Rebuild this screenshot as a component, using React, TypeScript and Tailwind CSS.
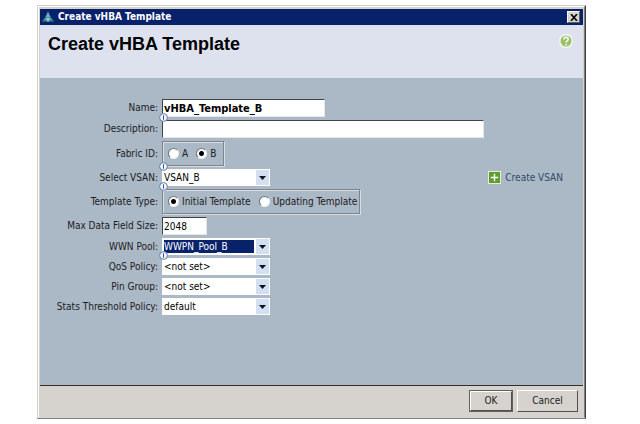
import { ReactNode } from 'react';

interface RowProps {
  label: string;
  htmlFor?: string;
  info?: boolean;
  children: ReactNode;
  action?: ReactNode;
}

export default function App() {
  return (
    <main className="bg-white pt-[5px] pr-[54px] pb-1 pl-[37px] font-['DejaVu_Sans_Condensed','DejaVu_Sans',sans-serif] text-[10px] leading-3 text-[#1c2024]">
      <div className="border border-t-[#d4d0c8] border-r-[#404040] border-b-[#808080] border-l-[#d4d0c8] bg-[#d6d3ce]">
        <div className="border border-t-white border-r-[#808080] border-b-[#d6d3ce] border-l-white px-px pt-[2px]">
          <TitleBar />
          <header className="flex h-[53px] items-start justify-between bg-[#dee2ef] pt-[9px] pr-[10px] pl-2">
            <h1 className="font-['Liberation_Sans',Arial,sans-serif] text-lg leading-5 font-bold text-black">
              Create vHBA Template
            </h1>
            <HelpIcon />
          </header>
          <TemplateForm />
          <footer className="flex justify-end gap-1 border-t border-[#303030] pt-1 pr-[5px] pb-[5px]">
            <button
              type="button"
              className="h-[22px] w-11 border-2 border-t-white border-r-[#505050] border-b-[#505050] border-l-white outline outline-1 -outline-offset-1 outline-[#606060]"
            >
              OK
            </button>
            <button
              type="button"
              className="h-[22px] w-[61px] border border-t-white border-r-[#505050] border-b-[#505050] border-l-white"
            >
              Cancel
            </button>
          </footer>
        </div>
      </div>
    </main>
  );
}

function TitleBar() {
  return (
    <div className="flex h-4 items-center gap-1 bg-[#08216b] pr-[3px] pl-[2px]">
      <svg viewBox="0 0 12 12" className="size-3" aria-hidden="true">
        <path d="M6 0.5 L8.5 6 H3.5 Z" fill="#6fb0b8" />
        <path d="M3.2 6 H8.8 L12 10.5 H0 Z" fill="#3f8494" />
        <path d="M3.5 7 H8.5 L6 11.5 Z" fill="#8cc8c8" />
      </svg>
      <span className="flex-1 font-bold text-white">Create vHBA Template</span>
      <button
        type="button"
        aria-label="Close"
        className="flex h-3 w-[13px] items-center justify-center border border-t-white border-r-[#606060] border-b-[#606060] border-l-white bg-[#d6d3ce]"
      >
        <svg viewBox="0 0 8 7" className="h-[7px] w-2" aria-hidden="true">
          <path d="M1 0 L7 7 M7 0 L1 7" stroke="#000" strokeWidth="1.6" />
        </svg>
      </button>
    </div>
  );
}

function TemplateForm() {
  return (
    <form className="flex flex-col gap-[3px] bg-[#abb8c5] px-5 pt-[21px] pb-[70px]">
      <Row label="Name:" htmlFor="name" info>
        <TextField id="name" value="vHBA_Template_B" className="w-[163px] text-[11px] font-bold" />
      </Row>
      <Row label="Description:" htmlFor="description">
        <TextField id="description" value="" className="w-[322px]" />
      </Row>
      <Row label="Fabric ID:" info>
        <RadioGroup name="fabric" label="Fabric ID" options={['A', 'B']} selected="B" />
      </Row>
      <Row
        label="Select VSAN:"
        htmlFor="vsan"
        info
        action={
          <a href="#create-vsan" className="flex items-center gap-1 text-[#2f4d6b]">
            <svg viewBox="0 0 14 14" className="size-[13px]" aria-hidden="true">
              <rect width="14" height="14" fill="#eef4e4" />
              <rect x="1" y="1" width="12" height="12" fill="#5f9e2e" />
              <path d="M7 3 V11 M3 7 H11" stroke="#fff" strokeWidth="1.5" />
            </svg>
            Create VSAN
          </a>
        }
      >
        <Dropdown id="vsan" value="VSAN_B" />
      </Row>
      <Row label="Template Type:">
        <RadioGroup
          name="type"
          label="Template Type"
          options={['Initial Template', 'Updating Template']}
          selected="Initial Template"
        />
      </Row>
      <Row label="Max Data Field Size:" htmlFor="max-size">
        <TextField id="max-size" value="2048" className="w-[45px]" />
      </Row>
      <Row label="WWN Pool:" htmlFor="pool" info>
        <Dropdown id="pool" value="WWPN_Pool_B" highlighted />
      </Row>
      <Row label="QoS Policy:" htmlFor="qos">
        <Dropdown id="qos" value="<not set>" />
      </Row>
      <Row label="Pin Group:" htmlFor="pin">
        <Dropdown id="pin" value="<not set>" />
      </Row>
      <Row label="Stats Threshold Policy:" htmlFor="stats">
        <Dropdown id="stats" value="default" />
      </Row>
    </form>
  );
}

function Row({ label, htmlFor, info, children, action }: RowProps) {
  const labelClass = 'flex w-[98px] flex-none justify-end whitespace-nowrap';

  return (
    <div className="flex items-center gap-1">
      {htmlFor ? (
        <label htmlFor={htmlFor} className={labelClass}>{label}</label>
      ) : (
        <span className={labelClass}>{label}</span>
      )}
      <div className="relative">
        {children}
        {info && <InfoBadge />}
      </div>
      {action && <div className="-my-1 ml-auto">{action}</div>}
    </div>
  );
}

function TextField({ id, value, className }: { id: string; value: string; className: string }) {
  return (
    <input
      id={id}
      type="text"
      defaultValue={value}
      className={`block h-[18px] border border-t-[#404448] border-r-[#e4e6e8] border-b-[#e4e6e8] border-l-[#404448] bg-white px-px leading-4 text-black ${className}`}
    />
  );
}

interface RadioGroupProps {
  name: string;
  label: string;
  options: string[];
  selected: string;
}

function RadioGroup({ name, label, options, selected }: RadioGroupProps) {
  return (
    <div
      role="radiogroup"
      aria-label={label}
      className="flex h-[25px] min-w-[62px] items-center gap-2 border border-[#7c858e] pr-[2px] pl-[5px] shadow-[inset_1px_1px_0_#d8dee4,1px_1px_0_#d8dee4]"
    >
      {options.map((option) => (
        <label key={option} className="flex items-center gap-[3px] whitespace-nowrap">
          <input
            type="radio"
            name={name}
            defaultChecked={option === selected}
            className="size-[11px] appearance-none rounded-full border border-t-[#6c737a] border-r-[#eef0f2] border-b-[#eef0f2] border-l-[#6c737a] bg-white checked:bg-[radial-gradient(circle,#000_2px,#fff_3px)]"
          />
          {option}
        </label>
      ))}
    </div>
  );
}

function Dropdown({ id, value, highlighted }: { id: string; value: string; highlighted?: boolean }) {
  return (
    <div className="relative w-[108px]">
      <select
        id={id}
        defaultValue={value}
        className={`block h-[17px] w-full appearance-none border-2 border-white pr-4 pl-0 leading-[13px] ${
          highlighted ? 'bg-[#08216b] text-white' : 'bg-white text-black'
        }`}
      >
        <option>{value}</option>
      </select>
      <span className="pointer-events-none absolute inset-y-0 right-0 flex w-4 items-center justify-center border border-l-2 border-white bg-[#d3dff2]">
        <svg viewBox="0 0 7 4" className="h-1 w-[7px]" aria-hidden="true">
          <path d="M0 0 H7 L3.5 4 Z" fill="#101418" />
        </svg>
      </span>
    </div>
  );
}

function InfoBadge() {
  return (
    <svg viewBox="0 0 9 9" className="absolute -bottom-[5px] -left-[3px] z-10 size-[9px]" aria-hidden="true">
      <circle cx="4.5" cy="4.5" r="3.9" fill="#f4f7ff" stroke="#6078a8" />
      <path d="M4.5 2.2 V6.8" stroke="#3458a0" />
    </svg>
  );
}

function HelpIcon() {
  return (
    <button type="button" aria-label="Help">
      <svg viewBox="0 0 14 14" className="size-3.5" aria-hidden="true">
        <circle cx="7" cy="7" r="6.2" fill="#9cc06a" stroke="#f3f8ea" strokeWidth="1.4" />
        <path d="M5 5.4 C5 2.6 9.2 2.8 9.2 5.2 C9.2 6.8 7 6.8 7 8.6" fill="none" stroke="#fff" strokeWidth="1.5" />
        <circle cx="7" cy="10.6" r="0.9" fill="#fff" />
      </svg>
    </button>
  );
}
